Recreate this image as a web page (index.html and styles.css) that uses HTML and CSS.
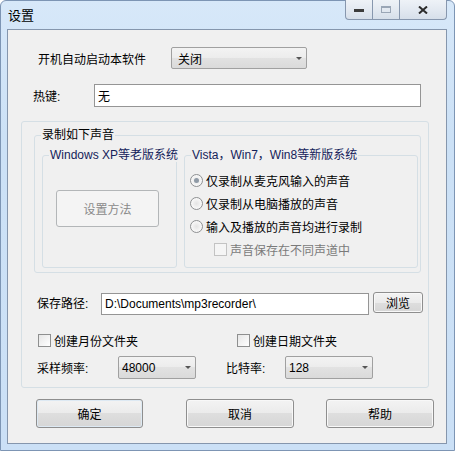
FILE: index.html
```html
<!DOCTYPE html>
<html lang="zh-CN">
<head>
    <meta charset="UTF-8">
    <title>设置</title>
    <link rel="stylesheet" href="styles.css">
</head>
<body>
<div class="window">
    <div class="titlebar">
        <span class="title">设置</span>
        <div class="caption-buttons">
            <span class="cap cap-min"><i></i></span>
            <span class="cap cap-max"><i></i></span>
            <span class="cap cap-close">
                <svg width="10" height="8" viewBox="0 0 10 8">
                    <path d="M1 0.5 L9 7.5 M9 0.5 L1 7.5" stroke="#2b2b2b" stroke-width="2" fill="none"/>
                </svg>
            </span>
        </div>
    </div>
    <div class="client">
        <div class="row row-autostart">
            <label class="lbl lbl-autostart">开机自动启动本软件</label>
            <div class="combo combo-autostart"><span>关闭</span><b class="arrow"></b></div>
        </div>
        <div class="row row-hotkey">
            <label class="lbl lbl-hotkey">热键:</label>
            <div class="textbox textbox-hotkey">无</div>
        </div>
        <div class="panel">
            <fieldset class="group group-record">
                <legend>录制如下声音</legend>
                <div class="group-cols">
                    <fieldset class="group group-xp">
                        <legend class="legend-sub">Windows XP等老版系统</legend>
                        <div class="xp-body">
                            <button class="btn btn-setup" disabled>设置方法</button>
                        </div>
                    </fieldset>
                    <fieldset class="group group-new">
                        <legend class="legend-sub">Vista，Win7，Win8等新版系统</legend>
                        <div class="options">
                            <div class="opt"><span class="radio checked"></span>仅录制从麦克风输入的声音</div>
                            <div class="opt"><span class="radio"></span>仅录制从电脑播放的声音</div>
                            <div class="opt"><span class="radio"></span>输入及播放的声音均进行录制</div>
                            <div class="opt opt-sub disabled"><span class="check"></span>声音保存在不同声道中</div>
                        </div>
                    </fieldset>
                </div>
            </fieldset>
            <div class="row row-path">
                <label class="lbl lbl-path">保存路径:</label>
                <div class="textbox textbox-path">D:\Documents\mp3recorder\</div>
                <button class="btn btn-browse">浏览</button>
            </div>
            <div class="row row-checks">
                <div class="chk-item chk-month"><span class="check"></span>创建月份文件夹</div>
                <div class="chk-item"><span class="check"></span>创建日期文件夹</div>
            </div>
            <div class="row row-audio">
                <label class="lbl lbl-rate">采样频率:</label>
                <div class="combo combo-rate"><span>48000</span><b class="arrow"></b></div>
                <label class="lbl lbl-bitrate">比特率:</label>
                <div class="combo combo-bitrate"><span>128</span><b class="arrow"></b></div>
            </div>
        </div>
        <div class="row row-actions">
            <button class="btn btn-action btn-default">确定</button>
            <button class="btn btn-action btn-cancel">取消</button>
            <button class="btn btn-action btn-help">帮助</button>
        </div>
    </div>
</div>
</body>
</html>
```

FILE: styles.css
```css
body {
    margin: 0;
    font-family: "Liberation Sans", "Noto Sans CJK SC", sans-serif;
    font-size: 12px;
    color: #000;
    background: #fff;
}
.window {
    width: 455px;
    height: 451px;
    box-sizing: border-box;
    border: 1px solid #7d95b4;
    border-radius: 6px 6px 0 0;
    background: linear-gradient(180deg, #d7e8f9 0%, #cce1f6 30%, #cbe0f6 100%);
    padding: 0 7px 6px 6px;
    display: flex;
    flex-direction: column;
}
.titlebar {
    height: 28px;
    flex: none;
    display: flex;
    justify-content: space-between;
    align-items: flex-start;
}
.title {
    padding-left: 1px;
    line-height: 29px;
    font-size: 13px;
    color: #000;
}
.caption-buttons {
    display: flex;
    margin-top: -1px;
    height: 20px;
}
.cap {
    height: 20px;
    box-sizing: border-box;
    border: 1px solid #8797ae;
    border-top: none;
    background: linear-gradient(180deg, #eef2f7 0%, #e3e9f1 50%, #d6dfea 100%);
    display: flex;
    justify-content: center;
    align-items: center;
}
.cap-min {
    width: 28px;
    border-radius: 0 0 0 4px;
}
.cap-min i {
    width: 10px;
    height: 3px;
    background: #3c3c3c;
    margin-top: 1px;
}
.cap-max {
    width: 27px;
    border-left: none;
}
.cap-max i {
    width: 10px;
    height: 7px;
    box-sizing: border-box;
    border: 1px solid #9aa6b6;
    border-top-width: 2px;
}
.cap-close {
    width: 47px;
    border-left: none;
    border-radius: 0 0 4px 0;
}
.client {
    flex: 1;
    border: 1px solid #8596ad;
    background: #f0f0f0;
    display: flex;
    flex-direction: column;
}
.row {
    display: flex;
    align-items: center;
}
.lbl {
    box-sizing: border-box;
    white-space: nowrap;
}
.row-autostart {
    margin-top: 17px;
}
.lbl-autostart {
    width: 163px;
    padding-left: 30px;
}
.row-hotkey {
    margin-top: 15px;
}
.lbl-hotkey {
    width: 86px;
    padding-left: 25px;
}
.combo {
    height: 22px;
    box-sizing: border-box;
    border: 1px solid #a0a0a0;
    border-radius: 2px;
    background: linear-gradient(180deg, #f3f3f3 0%, #ececec 50%, #e2e2e2 50%, #dadada 100%);
    display: flex;
    justify-content: space-between;
    align-items: center;
    padding: 0 4px 0 3px;
}
.combo-autostart {
    width: 136px;
    padding-left: 6px;
}
.arrow {
    width: 0;
    height: 0;
    border-left: 3px solid transparent;
    border-right: 3px solid transparent;
    border-top: 3px solid #555;
}
.textbox {
    box-sizing: border-box;
    border: 1px solid #959595;
    background: #fff;
    padding-left: 3px;
    display: flex;
    align-items: center;
    white-space: nowrap;
}
.textbox-hotkey {
    width: 327px;
    height: 23px;
}
.panel {
    margin: 14px 0 0 13px;
    width: 408px;
    height: 267px;
    box-sizing: border-box;
    border: 1px solid #d5dfe5;
    border-radius: 3px;
    padding: 6px 0 0 12px;
}
fieldset.group {
    margin: 0;
    padding: 0;
    min-width: 0;
    border: 1px solid #d5dfe5;
    border-radius: 3px;
}
fieldset.group legend {
    margin-left: 6px;
    padding: 0 1px;
    line-height: 14px;
    white-space: nowrap;
}
.legend-sub {
    color: #14225a;
}
.group-record {
    width: 387px;
    box-sizing: border-box;
}
.group-cols {
    display: flex;
    gap: 7px;
    padding: 6px 0 4px 7px;
}
.group-xp {
    width: 135px;
    box-sizing: border-box;
}
.group-new {
    width: 234px;
    box-sizing: border-box;
}
.xp-body {
    height: 105px;
    box-sizing: border-box;
    padding: 28px 0 0 13px;
}
.btn {
    font-family: inherit;
    font-size: 12px;
    color: #000;
    box-sizing: border-box;
    border: 1px solid #8e8e8e;
    border-radius: 3px;
    background: linear-gradient(180deg, #f3f3f3 0%, #ebebeb 50%, #dedede 50%, #d6d6d6 100%);
    box-shadow: inset 0 0 0 1px #f8f8f8;
    padding: 0;
    display: flex;
    justify-content: center;
    align-items: center;
}
.btn-setup {
    width: 103px;
    height: 37px;
    border-color: #b3b6b8;
    background: #f4f4f4;
    box-shadow: none;
    color: #8a8a8a;
}
.options {
    height: 105px;
    box-sizing: border-box;
    padding: 7px 0 0 5px;
}
.opt {
    height: 23px;
    display: flex;
    align-items: center;
    white-space: nowrap;
}
.radio {
    width: 13px;
    height: 13px;
    box-sizing: border-box;
    border: 1px solid #8e9092;
    border-radius: 50%;
    background: radial-gradient(circle, #e4e4e4 0%, #f6f6f6 60%, #ffffff 100%);
    margin-right: 3px;
    display: flex;
    justify-content: center;
    align-items: center;
}
.radio.checked::after {
    content: '';
    width: 5px;
    height: 5px;
    border-radius: 50%;
    background: #8f9aa6;
}
.check {
    width: 13px;
    height: 13px;
    box-sizing: border-box;
    border: 1px solid #8e8f8f;
    background: linear-gradient(135deg, #e6e6e6 0%, #ffffff 100%);
    margin-right: 3px;
    flex: none;
}
.opt-sub {
    padding-left: 24px;
    height: 22px;
}
.disabled {
    color: #7a7a7a;
}
.disabled .check {
    border-color: #c3c3c3;
    background: #f5f5f5;
}
.row-path {
    margin-top: 19px;
    align-items: flex-start;
}
.lbl-path {
    width: 67px;
    padding-left: 3px;
    line-height: 23px;
    margin-top: 1px;
}
.textbox-path {
    width: 268px;
    height: 22px;
    margin-top: 1px;
}
.btn-browse {
    width: 50px;
    height: 21px;
    margin-left: 4px;
}
.row-checks {
    margin-top: 16px;
    height: 17px;
    padding-left: 4px;
}
.chk-item {
    display: flex;
    align-items: center;
    white-space: nowrap;
}
.chk-month {
    width: 199px;
}
.row-audio {
    margin-top: 7px;
    height: 23px;
}
.lbl-rate {
    width: 84px;
    padding-left: 3px;
}
.combo-rate {
    width: 78px;
    height: 23px;
}
.lbl-bitrate {
    width: 59px;
    margin-left: 30px;
}
.combo-bitrate {
    width: 88px;
    height: 23px;
}
.row-actions {
    margin-top: 11px;
    padding-left: 28px;
}
.btn-action {
    width: 108px;
    height: 29px;
}
.btn-default {
    width: 107px;
    box-shadow: inset 0 0 0 1px #dde9f3;
}
.btn-cancel {
    margin-left: 43px;
}
.btn-help {
    margin-left: 32px;
}
```
